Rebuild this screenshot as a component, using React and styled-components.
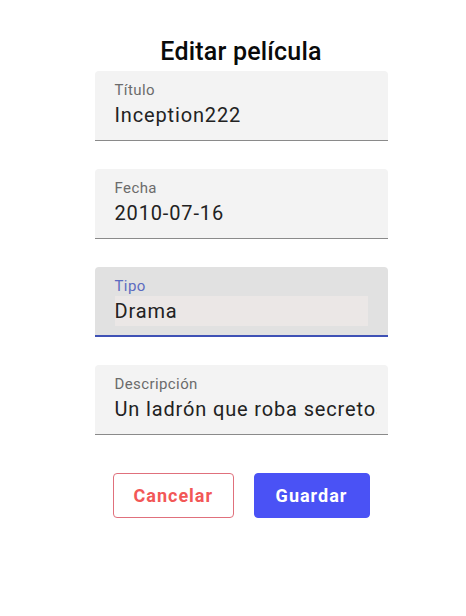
import React from "react";
import styled, { createGlobalStyle } from "styled-components";

const Global = createGlobalStyle`
  body {
    margin: 0;
    background: #ffffff;
    font-family: Roboto, "Liberation Sans", sans-serif;
  }
`;

const Page = styled.div`
  width: 466px;
  height: 616px;
  display: flex;
  flex-direction: column;
  align-items: center;
  padding: 36px 0 0 16px;
  box-sizing: border-box;
`;

const Title = styled.h2`
  margin: 0;
  font-size: 25px;
  line-height: 32px;
  font-weight: 500;
  color: #0a0a0a;
  letter-spacing: 0.2px;
`;

const Form = styled.div`
  width: 293px;
  display: flex;
  flex-direction: column;
  gap: 28px;
  margin-top: 3px;
`;

const Field = styled.div`
  height: 70px;
  box-sizing: border-box;
  border-radius: 4px 4px 0 0;
  background: ${(p) => (p.$focused ? "#e1e1e1" : "#f3f3f3")};
  border-bottom: ${(p) => (p.$focused ? "2px solid #3f51b5" : "1px solid #8a8a8a")};
  padding: 11px 11px 0 20px;
  overflow: hidden;
  display: flex;
  flex-direction: column;
`;

const Label = styled.label`
  font-size: 15px;
  line-height: 16px;
  color: ${(p) => (p.$focused ? "#5c6bc0" : "#6b6b6b")};
  letter-spacing: 0.4px;
`;

const Value = styled.div`
  margin-top: 2px;
  margin-right: ${(p) => (p.$filled ? "9px" : "0")};
  font-size: 20px;
  line-height: 30px;
  color: #222;
  letter-spacing: 0.85px;
  white-space: nowrap;
  overflow: hidden;
  background: ${(p) => (p.$filled ? "#ebe7e6" : "transparent")};
`;

const Actions = styled.div`
  display: flex;
  gap: 20px;
  margin-top: 38px;
`;

const Button = styled.button`
  height: 45px;
  box-sizing: border-box;
  border-radius: 4px;
  font-family: Roboto, "Liberation Sans", sans-serif;
  font-size: 18px;
  font-weight: 700;
  letter-spacing: 1px;
  padding: 0 20px;
  cursor: pointer;
  border: 1px solid ${(p) => (p.$primary ? "#4a52f5" : "#e0707c")};
  background: ${(p) => (p.$primary ? "#4a52f5" : "#ffffff")};
  color: ${(p) => (p.$primary ? "#ffffff" : "#f25757")};
  width: ${(p) => p.$w}px;
`;

const fields = [
  { label: "Título", value: "Inception222" },
  { label: "Fecha", value: "2010-07-16" },
  { label: "Tipo", value: "Drama", focused: true },
  { label: "Descripción", value: "Un ladrón que roba secretos corporativos" },
];

export default function App() {
  return (
    <Page>
      <Global />
      <Title>Editar película</Title>
      <Form>
        {fields.map((f) => (
          <Field key={f.label} $focused={f.focused}>
            <Label $focused={f.focused}>{f.label}</Label>
            <Value $filled={f.focused}>{f.value}</Value>
          </Field>
        ))}
      </Form>
      <Actions>
        <Button $w={121}>Cancelar</Button>
        <Button $primary $w={116}>Guardar</Button>
      </Actions>
    </Page>
  );
}
